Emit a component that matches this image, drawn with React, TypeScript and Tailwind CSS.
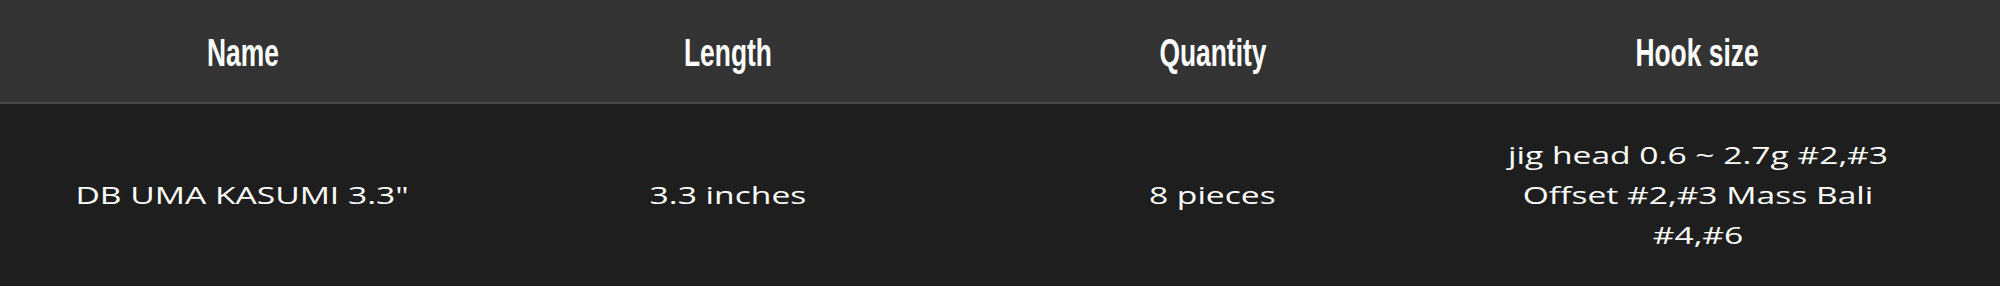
const columns = ["Name", "Length", "Quantity", "Hook size"];

const rows = [
  {
    name: 'DB UMA KASUMI 3.3"',
    length: "3.3 inches",
    quantity: "8 pieces",
    hook: "jig head 0.6 ~ 2.7g #2,#3 Offset #2,#3 Mass Bali #4,#6",
  },
];

const App = () => {
  return (
    <div className="w-[2000px] h-[286px] bg-[#1e1e1e] text-white overflow-hidden">
      <div className="bg-[#333333] border-b-2 border-[#4b4b4b]">
        <div className="grid grid-cols-4 w-[1940px] h-[102px] items-center">
          {columns.map((col) => (
            <div
              key={col}
              className="text-center font-['Liberation_Sans_Narrow',sans-serif] font-bold text-[33px] leading-none"
            >
              <span className="inline-block scale-x-[0.8] scale-y-[1.17] translate-y-[1px]">
                {col}
              </span>
            </div>
          ))}
        </div>
      </div>
      {rows.map((row) => (
        <div
          key={row.name}
          className="grid grid-cols-4 w-[1940px] h-[182px] items-center text-center font-['Open_Sans',sans-serif] text-[24px] leading-[40px]"
        >
          <div className="flex justify-center">
            <span className="inline-block scale-x-[1.4]">{row.name}</span>
          </div>
          <div className="flex justify-center">
            <span className="inline-block scale-x-[1.4]">{row.length}</span>
          </div>
          <div className="flex justify-center">
            <span className="inline-block scale-x-[1.4]">{row.quantity}</span>
          </div>
          <div className="flex justify-center">
            <span className="inline-block w-[290px] scale-x-[1.4]">{row.hook}</span>
          </div>
        </div>
      ))}
    </div>
  );
};

export default App;
